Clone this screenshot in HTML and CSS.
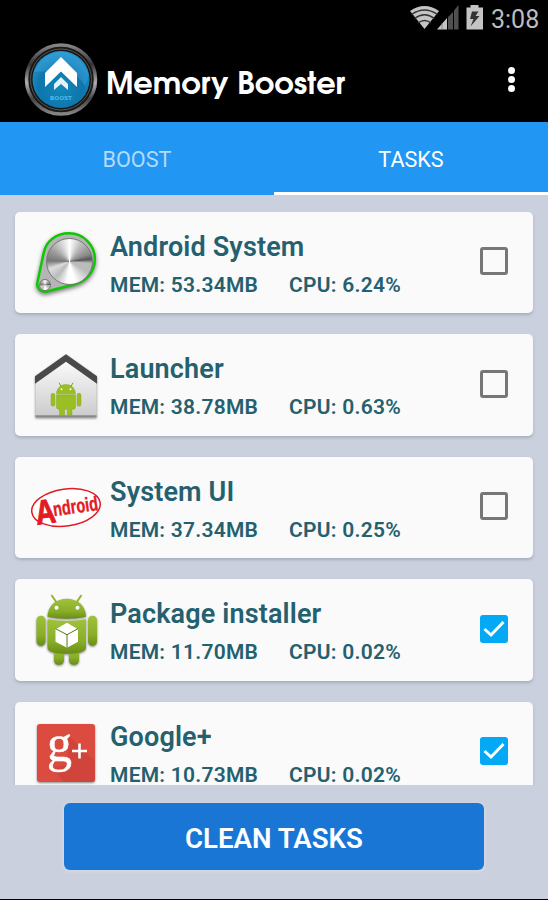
FILE: index.html
```html
<!DOCTYPE html>
<html lang="en">
<head>
<meta charset="utf-8">
<title>Memory Booster</title>
<link rel="stylesheet" href="styles.css">
</head>
<body>
<div class="app">
  <div class="status">
    <svg class="signals" width="76" height="30" viewBox="408 3 76 30">
      <path d="M410 11Q424.500 1 439 11L424.500 29Z" fill="#c4c4c4"/>
      <path d="M411.500 14.500Q424.500 5.500 437.500 14.500M414.500 18.500Q424.500 11 434.500 18.500M418 23Q424.500 18 431 23" fill="none" stroke="#333" stroke-width="1.300"/>
      <path d="M437 29.500L447 18V29.500Z" fill="#c4c4c4"/>
      <path d="M448 29.500V17L453 12V29.500ZM454 29.500V10.500L458.500 5V29.500Z" fill="#505050"/>
      <path d="M442 23V29.500" stroke="#777" stroke-width=".8"/>
      <path d="M466.500 7.500H470.500V5H478.500V7.500H483V29.500H466.500Z" fill="#c4c4c4"/>
      <path d="M472 11.500H478.500L475.500 16H479.500L470.500 26.500L473.500 19H470Z" fill="#333"/>
    </svg>
    <span class="clock">3:08</span>
  </div>
  <header class="bar">
    <svg class="logo" width="76" height="76" viewBox="23 41 76 76">
      <defs>
        <linearGradient id="rim" x1="0" y1="0" x2="0" y2="1"><stop offset="0" stop-color="#858585"/><stop offset=".28" stop-color="#343434"/><stop offset=".55" stop-color="#b0b0b0"/><stop offset=".78" stop-color="#444"/><stop offset="1" stop-color="#858585"/></linearGradient>
        <radialGradient id="blue" cx=".5" cy=".65" r=".65"><stop offset="0" stop-color="#1287b8"/><stop offset=".6" stop-color="#0e76ad"/><stop offset="1" stop-color="#2597d2"/></radialGradient>
      </defs>
      <circle cx="61" cy="79.500" r="34.500" fill="#181818" stroke="url(#rim)" stroke-width="3.500"/>
      <circle cx="61" cy="79.500" r="30.500" fill="#171717" stroke="#555" stroke-width="1"/>
      <circle cx="61" cy="79.500" r="28.500" fill="url(#blue)"/>
      <path d="M34 72Q43 53 61 52Q79 53 88 73Q88 81 85 86Q79 75 69 73Q51 70 34 72Z" fill="#4bb0e4" opacity=".35"/>
      <path d="M61 57L77 73V87L61 71.500L45 87V73Z" fill="#fff"/>
      <path d="M61 77L68 84V90L61 84L54 90V84Z" fill="#e3f1f8"/>
      <text x="50" y="99.500" class="logo-text" textLength="22" lengthAdjust="spacingAndGlyphs">BOOST</text>
    </svg>
    <h1 class="name">Memory Booster</h1>
    <div class="more"><i></i><i></i><i></i></div>
  </header>
  <nav class="tabs"><div class="tab">BOOST</div><div class="tab active">TASKS</div></nav>
  <main class="list">
    <section class="card">
      <svg class="icon" width="90" height="80" viewBox="0 0 90 80">
        <path d="M23.700 26C26 14 36 6.300 49 6.300A25.700 25.700 0 0 1 74.800 32C74.800 45 66 54.500 54 57.500L26.500 64.500C20 65.500 16 60 17.500 55Z" class="knob-base"/>
        <foreignObject x="25.500" y="10.500" width="47" height="47"><div class="knob"></div></foreignObject>
        <foreignObject x="18.500" y="51.500" width="12" height="12"><div class="knob small"></div></foreignObject>
      </svg>
      <div class="info"><h2>Android System</h2><p><span class="mem">MEM: 53.34MB</span><span>CPU: 6.24%</span></p></div>
      <span class="check"></span>
    </section>
    <section class="card">
      <svg class="icon" width="90" height="80" viewBox="0 3.700 90 80">
        <defs><linearGradient id="house" x1="0" y1="0" x2="0" y2="1"><stop offset="0" stop-color="#fff"/><stop offset="1" stop-color="#cbcbcb"/></linearGradient></defs>
        <g class="shade"><path d="M15.500 33L46 10L76.500 33V72H15.500Z" fill="url(#house)"/><path d="M15 31L46 9L77 31V38.500L46 16.500L15 38.500Z" fill="#4a4a4a"/><path d="M15.500 71H76.500" stroke="#888" stroke-width="2"/></g>
        <g fill="#99bf22" stroke="#7d9f19" stroke-width=".4"><path d="M36.500 48.500C37 36 55 36 55.500 48.500ZM36.500 49.500H55.500V62Q55.500 64 53 64H52V70H47.500V64H44.500V70H39.500V64Q36.500 64 36.500 62Z"/><rect x="31" y="48" width="4" height="13" rx="2"/><rect x="57" y="48" width="4" height="13" rx="2"/><path d="M41 41L39 37.500M51 41L53 37.500" stroke-width="1"/></g>
        <g fill="#fff"><circle cx="41.500" cy="44" r="1"/><circle cx="50.500" cy="44" r="1"/></g>
      </svg>
      <div class="info"><h2>Launcher</h2><p><span class="mem">MEM: 38.78MB</span><span>CPU: 0.63%</span></p></div>
      <span class="check"></span>
    </section>
    <section class="card">
      <svg class="icon" width="90" height="80" viewBox="0 4.500 90 80">
        <g transform="rotate(-8 46 40)"><ellipse cx="46" cy="40" rx="34.500" ry="18.500" fill="#fff" stroke="#e31b23" stroke-width="1.500"/><text class="kit big" x="15" y="53" textLength="20" lengthAdjust="spacingAndGlyphs">A</text><text class="kit" x="33" y="47" textLength="45" lengthAdjust="spacingAndGlyphs">ndroid</text></g>
      </svg>
      <div class="info"><h2>System UI</h2><p><span class="mem">MEM: 37.34MB</span><span>CPU: 0.25%</span></p></div>
      <span class="check"></span>
    </section>
    <section class="card">
      <svg class="icon" width="90" height="80" viewBox="0 4.300 90 80">
        <defs><linearGradient id="droid" x1="0" y1="0" x2="0" y2="1"><stop offset="0" stop-color="#a0c23b"/><stop offset=".65" stop-color="#88ad27"/><stop offset="1" stop-color="#688d16"/></linearGradient></defs>
        <g class="shade" fill="url(#droid)"><rect x="34" y="56" width="10" height="19" rx="4.500"/><rect x="49" y="56" width="10" height="19" rx="4.500"/><rect x="16.500" y="26" width="9" height="30" rx="4.500"/><rect x="68" y="26" width="9" height="30" rx="4.500"/><path d="M27.500 27C28 3 65.500 3 66 27Q47 31 27.500 27Z"/><path d="M27.500 29.500Q47 33 66 29.500V58Q65 64 47 64Q28 64 27.500 58Z"/></g>
        <path d="M36 12L32 6M57 12L61 6" stroke="#91b62e" stroke-width="2" stroke-linecap="round"/>
        <circle cx="36.500" cy="18" r="2" fill="#fff"/><circle cx="57.500" cy="18" r="2" fill="#fff"/>
        <path d="M47 33L58 39.500V52L47 58L35.500 52V39.500Z" fill="#fff"/><path d="M35.500 39L47 45L58 39M47 45V58" fill="none" stroke="#58751b" stroke-width="1"/>
      </svg>
      <div class="info"><h2>Package installer</h2><p><span class="mem">MEM: 11.70MB</span><span>CPU: 0.02%</span></p></div>
      <span class="check on"><svg width="28" height="28" viewBox="0 0 28 28"><path d="M4.500 14L11 20L23.500 7"/></svg></span>
    </section>
    <section class="card">
      <svg class="icon" width="90" height="80" viewBox="0 0 90 80">
        <rect class="shade" x="17" y="7" width="58" height="58" rx="3" fill="#dc4b3f"/>
        <path d="M49 19L75 44V62Q75 65 72 65H44L32 51L47 48Z" fill="#bd3a33" opacity=".35"/>
        <text class="gplus" x="27" y="43.500" textLength="25" lengthAdjust="spacingAndGlyphs">g</text>
        <path d="M52 34H67M59.500 26.500V41.500" stroke="#fff" stroke-width="2.600"/>
      </svg>
      <div class="info"><h2>Google+</h2><p><span class="mem">MEM: 10.73MB</span><span>CPU: 0.02%</span></p></div>
      <span class="check on"><svg width="28" height="28" viewBox="0 0 28 28"><path d="M4.500 14L11 20L23.500 7"/></svg></span>
    </section>
  </main>
  <footer class="foot"><button class="clean">CLEAN TASKS</button></footer>
</div>
</body>
</html>
```
FILE: styles.css
```css
* { box-sizing: border-box; }
body { margin: 0; background: #000; font-family: Roboto, sans-serif; }
.app { width: 548px; height: 900px; display: flex; flex-direction: column; overflow: hidden; background: #cad0dd; border-bottom: 1px solid #000; }
.status { height: 38px; flex: none; background: #000; display: flex; justify-content: flex-end; padding: 3px 10px 0 0; }
.signals { flex: none; margin-right: 7px; }
.clock { color: #bdbdbd; font-size: 25px; line-height: 33px; width: 47px; white-space: nowrap; }
.bar { height: 84px; flex: none; background: #000; display: flex; padding: 3px 33px 0 23px; }
.logo { flex: none; }
.logo-text { font: bold 5.500px "DejaVu Sans", sans-serif; fill: #4bb9e8; }
.name { margin: 27px auto 0 7px; color: #fff; font: bold 30.400px/36px "TeX Gyre Adventor", "URW Gothic", Lato, sans-serif; white-space: nowrap; }
.more { display: flex; flex-direction: column; gap: 2px; padding-top: 26px; }
.more i { width: 7px; height: 7px; border-radius: 50%; background: #fff; }
.tabs { height: 73px; flex: none; display: flex; background: #2196f3; }
.tab { flex: 1; text-align: center; font-size: 21.600px; line-height: 76px; color: #b4dbfb; }
.tab.active { color: #fff; box-shadow: inset 0 -3px #fff; }
.list { height: 589.500px; flex: none; overflow: hidden; padding: 16.500px 15px 0; display: flex; flex-direction: column; gap: 21.100px; }
.card { height: 101.500px; flex: none; display: flex; background: #fafafa; border-radius: 5px; box-shadow: 0 2px 3px #9299ab99; padding: 0 25px 0 5px; }
.icon { flex: none; margin-top: 15px; }
.info { flex: 1; color: #25606f; white-space: nowrap; }
.info h2 { margin: 17px 0 0; font-size: 27px; line-height: 36px; font-weight: 600; letter-spacing: .15px; }
.info p { margin: 6px 0 0; display: flex; font-size: 21px; line-height: 28px; font-weight: 600; letter-spacing: .25px; }
.mem { width: 179px; }
.check { width: 28px; height: 28px; flex: none; margin-top: 35.500px; border: 3px solid #777; border-radius: 3px; }
.check.on { border: 0; background: #03a9f4; }
.check svg { display: block; fill: none; stroke: #fff; stroke-width: 3; }
.shade { filter: drop-shadow(0 1px 1px #0007); }
.knob-base { fill: #b5b5b5; stroke: #0cc800; stroke-width: 2.500px; filter: drop-shadow(0 2px 2px #0008); }
.knob { width: 47px; height: 47px; border-radius: 50%; border: 1.500px solid #777; background: conic-gradient(#fff, #bbb 35deg, #888 70deg, #555 84deg, #bbb 95deg, #bbb 120deg, #fff 165deg, #fff 185deg, #bbb 220deg, #ddd 250deg, #777 272deg, #999 300deg, #ccc 330deg, #fff); }
.knob.small { width: 12px; height: 12px; }
.kit { font: bold 20px "Liberation Sans", sans-serif; fill: #e31b23; stroke: #e31b23; stroke-width: .4px; }
.kit.big { font-size: 34px; stroke-width: 1px; }
.gplus { font: 53px "Liberation Serif", serif; fill: #fff; stroke: #fff; stroke-width: .5px; }
.foot { flex: 1; padding: 18.500px 64px 0; }
.clean { width: 420px; height: 67px; padding: 5px 0 0; border: 0; border-radius: 6px; background: #1976d4; color: #fff; font: 600 27.600px/34px Roboto, sans-serif; box-shadow: 0 1px 2px 2px #d2d6e2; }
```
